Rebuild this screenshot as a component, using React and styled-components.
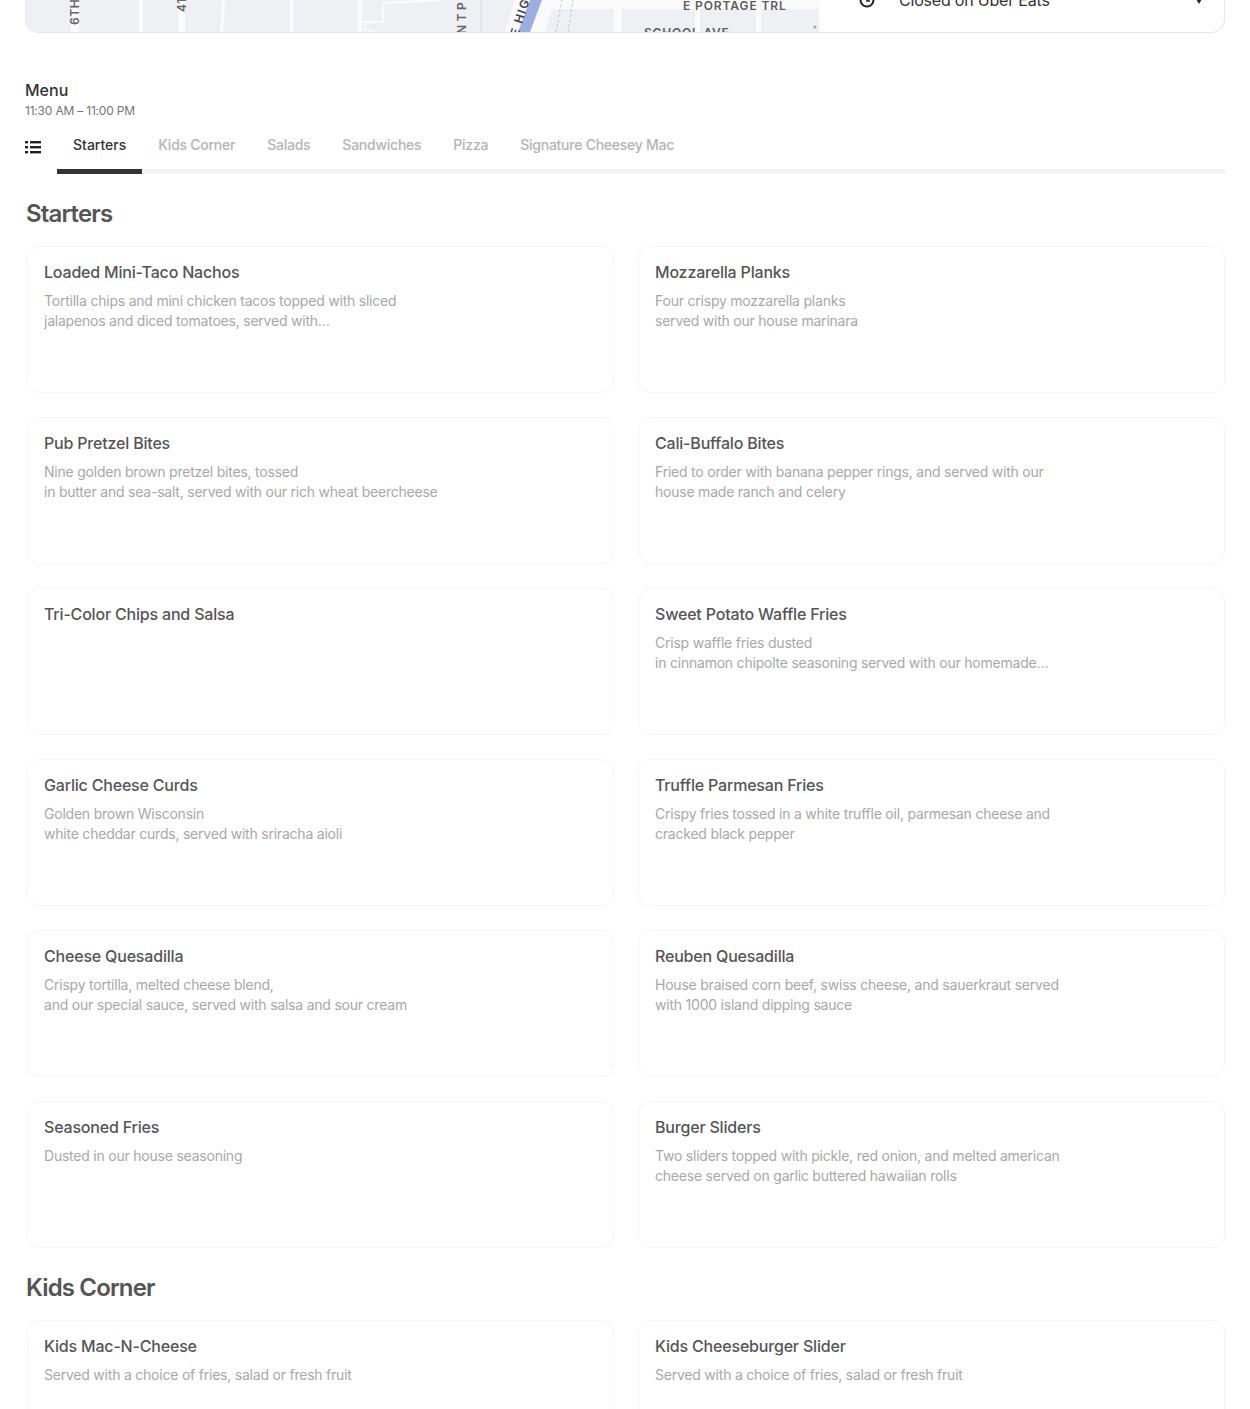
import React from 'react';
import styled, { createGlobalStyle } from 'styled-components';

const Global = createGlobalStyle`
  html, body { margin: 0; padding: 0; background: #fff; }
  body { font-family: "Inter", "Liberation Sans", sans-serif; overflow: hidden; height: 1409px; }
`;
const Page = styled.div`width: 1250px; height: 1409px; overflow: hidden; padding: 0 25px; box-sizing: border-box;`;
const Hero = styled.div`display: flex; height: 33px; border: 1px solid #e6e6e6; border-top: 0; border-radius: 0 0 14px 14px; overflow: hidden; box-sizing: border-box;`;
const MapBox = styled.div`width: 794px; flex: none; background: #eef0f3; margin-left: -1px;`;
const StatusRow = styled.div`flex: 1; display: flex; align-items: center; gap: 23px; height: 20px; margin-top: -10px; padding: 0 21px 0 39px;`;
const StatusText = styled.span`font-size: 16px; color: #333; line-height: 20px; letter-spacing: -.2px;`;
const Chevron = styled.svg`margin-left: auto; flex: none;`;
const MenuHead = styled.div`margin-top: 47px;`;
const MenuTitle = styled.div`font-size: 16px; line-height: 20px; color: #333; font-weight: 500;`;
const Hours = styled.div`font-size: 12px; line-height: 20px; margin-top: 1px; color: #757575; letter-spacing: -.2px;`;
const TabBar = styled.div`display: flex; height: 44px; margin-top: 9px;`;
const ListIcon = styled.div`width: 32px; flex: none; padding-top: 8px;`;
const Tabs = styled.div`flex: 1; display: flex; border-bottom: 5px solid #f3f3f3; height: 39px; box-sizing: content-box;`;
const Tab = styled.div`padding: 0 16px; font-size: 14px; font-weight: 500; line-height: 30px; height: 39px; box-sizing: content-box; letter-spacing: ${p => p.$on ? '0' : '-.25px'}; color: ${p => p.$on ? '#333' : '#b4b4b4'}; ${p => p.$on ? 'border-bottom: 5px solid #333; margin-bottom: -5px;' : ''}`;
const SectionTitle = styled.h2`margin: 0; font-size: 24px; line-height: 32px; font-weight: 600; color: #555; letter-spacing: -.85px; padding-left: 1px;`;
const Grid = styled.div`display: grid; grid-template-columns: 587px 587px; column-gap: 24px; row-gap: 24px; padding-left: 2px;`;
const Card = styled.div`height: 147px; box-sizing: border-box; border: 1px solid #f6f6f6; border-radius: 12px; padding: 15px 16px;`;
const ItemName = styled.div`font-size: 16px; line-height: 20px; font-weight: 500; color: #555; letter-spacing: -.19px;`;
const ItemDesc = styled.div`font-size: 14px; line-height: 20px; color: #a8a8a8; margin-top: 9px; white-space: pre-line; letter-spacing: -.22px;`;
const SectionHead = styled.div`margin: ${p => p.$top}px 0 16px;`;

const starters = [
  ['Loaded Mini-Taco Nachos', 'Tortilla chips and mini chicken tacos topped with sliced\njalapenos and diced tomatoes, served with…'],
  ['Mozzarella Planks', 'Four crispy mozzarella planks\nserved with our house marinara'],
  ['Pub Pretzel Bites', 'Nine golden brown pretzel bites, tossed\nin butter and sea-salt, served with our rich wheat beercheese'],
  ['Cali-Buffalo Bites', 'Fried to order with banana pepper rings, and served with our\nhouse made ranch and celery'],
  ['Tri-Color Chips and Salsa', ''],
  ['Sweet Potato Waffle Fries', 'Crisp waffle fries dusted\nin cinnamon chipolte seasoning served with our homemade…'],
  ['Garlic Cheese Curds', 'Golden brown Wisconsin\nwhite cheddar curds, served with sriracha aioli'],
  ['Truffle Parmesan Fries', 'Crispy fries tossed in a white truffle oil, parmesan cheese and\ncracked black pepper'],
  ['Cheese Quesadilla', 'Crispy tortilla, melted cheese blend,\nand our special sauce, served with salsa and sour cream'],
  ['Reuben Quesadilla', 'House braised corn beef, swiss cheese, and sauerkraut served\nwith 1000 island dipping sauce'],
  ['Seasoned Fries', 'Dusted in our house seasoning'],
  ['Burger Sliders', 'Two sliders topped with pickle, red onion, and melted american\ncheese served on garlic buttered hawaiian rolls'],
];
const kids = [
  ['Kids Mac-N-Cheese', 'Served with a choice of fries, salad or fresh fruit'],
  ['Kids Cheeseburger Slider', 'Served with a choice of fries, salad or fresh fruit'],
];
const tabs = ['Starters', 'Kids Corner', 'Salads', 'Sandwiches', 'Pizza', 'Signature Cheesey Mac'];

const MapArt = () => (
  <svg width="794" height="32" viewBox="0 0 794 32">
    <rect width="794" height="32" fill="#eef0f3" />
    <g fill="#fbfbfc">
      <rect x="46" y="0" width="8" height="32" />
      <rect x="114" y="0" width="4" height="32" />
      <rect x="153" y="0" width="7" height="32" />
      <path d="M197 0 H200 L198 32 H195 Z" />
      <rect x="265" y="0" width="3.5" height="32" />
      <rect x="333" y="0" width="4" height="32" />
      <rect x="525" y="0" width="269" height="9" />
      <rect x="589" y="0" width="8" height="32" />
      <rect x="670" y="0" width="5" height="32" />
      <rect x="731" y="0" width="5" height="32" />
      <path d="M480 32 L490 0 L510 0 L495 32 Z" />
      <path d="M505 32 L515 0 L530 0 L520 32 Z" />
    </g>
    <path d="M337 22 H358 M337 29 L350 32 M358 22 V2 M340 22 V29" fill="none" stroke="#fbfbfc" strokeWidth="2" />
    <path d="M360 3 L415 0" fill="none" stroke="#fbfbfc" strokeWidth="2" />
    <rect x="455.5" y="0" width="1" height="32" fill="#d3dae9" />
    <path d="M493 32 L505 0 L517 0 L505 32 Z" fill="#9daedd" />
    <path d="M531 32 L537 0 M543 32 L548 0" fill="none" stroke="#c6c8cc" strokeWidth="1" strokeDasharray="3 2" />
    <circle cx="790" cy="27" r="1.6" fill="#a9abb0" />
    <g fontFamily="Inter, sans-serif" fontSize="12" fontWeight="600" fill="#666">
      <text transform="translate(54 25) rotate(-90)" letterSpacing=".6">6TH</text>
      <text transform="translate(161 12) rotate(-90)" letterSpacing=".6">41</text>
      <text transform="translate(441 34) rotate(-90)" letterSpacing="3.5">NTP</text>
      <text transform="translate(493 37) rotate(-72)" letterSpacing="1.5" fill="#3c4252">E HIG</text>
      <text x="658" y="10" letterSpacing=".9" fill="#5c5c5c">E PORTAGE TRL</text>
      <text x="619" y="37" letterSpacing=".8" fill="#5c5c5c">SCHOOL AVE</text>
    </g>
  </svg>
);

const Lines = () => (
  <svg width="16" height="14" viewBox="0 0 16 14" fill="#222">
    <rect x="0" y="1" width="3" height="2.4" /><rect x="5" y="1" width="11" height="2.4" />
    <rect x="0" y="6" width="3" height="2.4" /><rect x="5" y="6" width="11" height="2.4" />
    <rect x="0" y="11" width="3" height="2.4" /><rect x="5" y="11" width="11" height="2.4" />
  </svg>
);

const ItemGrid = ({ items }) => (
  <Grid>
    {items.map(([n, d]) => (
      <Card key={n}><ItemName>{n}</ItemName>{d && <ItemDesc>{d}</ItemDesc>}</Card>
    ))}
  </Grid>
);

export default function App() {
  return (
    <Page>
      <Global />
      <Hero>
        <MapBox><MapArt /></MapBox>
        <StatusRow>
          <svg width="18" height="18" viewBox="0 0 18 18">
            <circle cx="9" cy="9" r="6.5" fill="none" stroke="#222" strokeWidth="2" />
            <path d="M9 5 V10 H12" fill="none" stroke="#222" strokeWidth="1.6" />
          </svg>
          <StatusText>Closed on Uber Eats</StatusText>
          <Chevron width="8" height="8" viewBox="0 0 8 8"><path d="M0.5 2 H7.5 L4 8 Z" fill="#222" /></Chevron>
        </StatusRow>
      </Hero>
      <MenuHead>
        <MenuTitle>Menu</MenuTitle>
        <Hours>11:30 AM – 11:00 PM</Hours>
      </MenuHead>
      <TabBar>
        <ListIcon><Lines /></ListIcon>
        <Tabs>{tabs.map((t, i) => <Tab key={t} $on={i === 0}>{t}</Tab>)}</Tabs>
      </TabBar>
      <SectionHead $top={24}><SectionTitle>Starters</SectionTitle></SectionHead>
      <ItemGrid items={starters} />
      <SectionHead $top={24}><SectionTitle>Kids Corner</SectionTitle></SectionHead>
      <ItemGrid items={kids} />
    </Page>
  );
}
